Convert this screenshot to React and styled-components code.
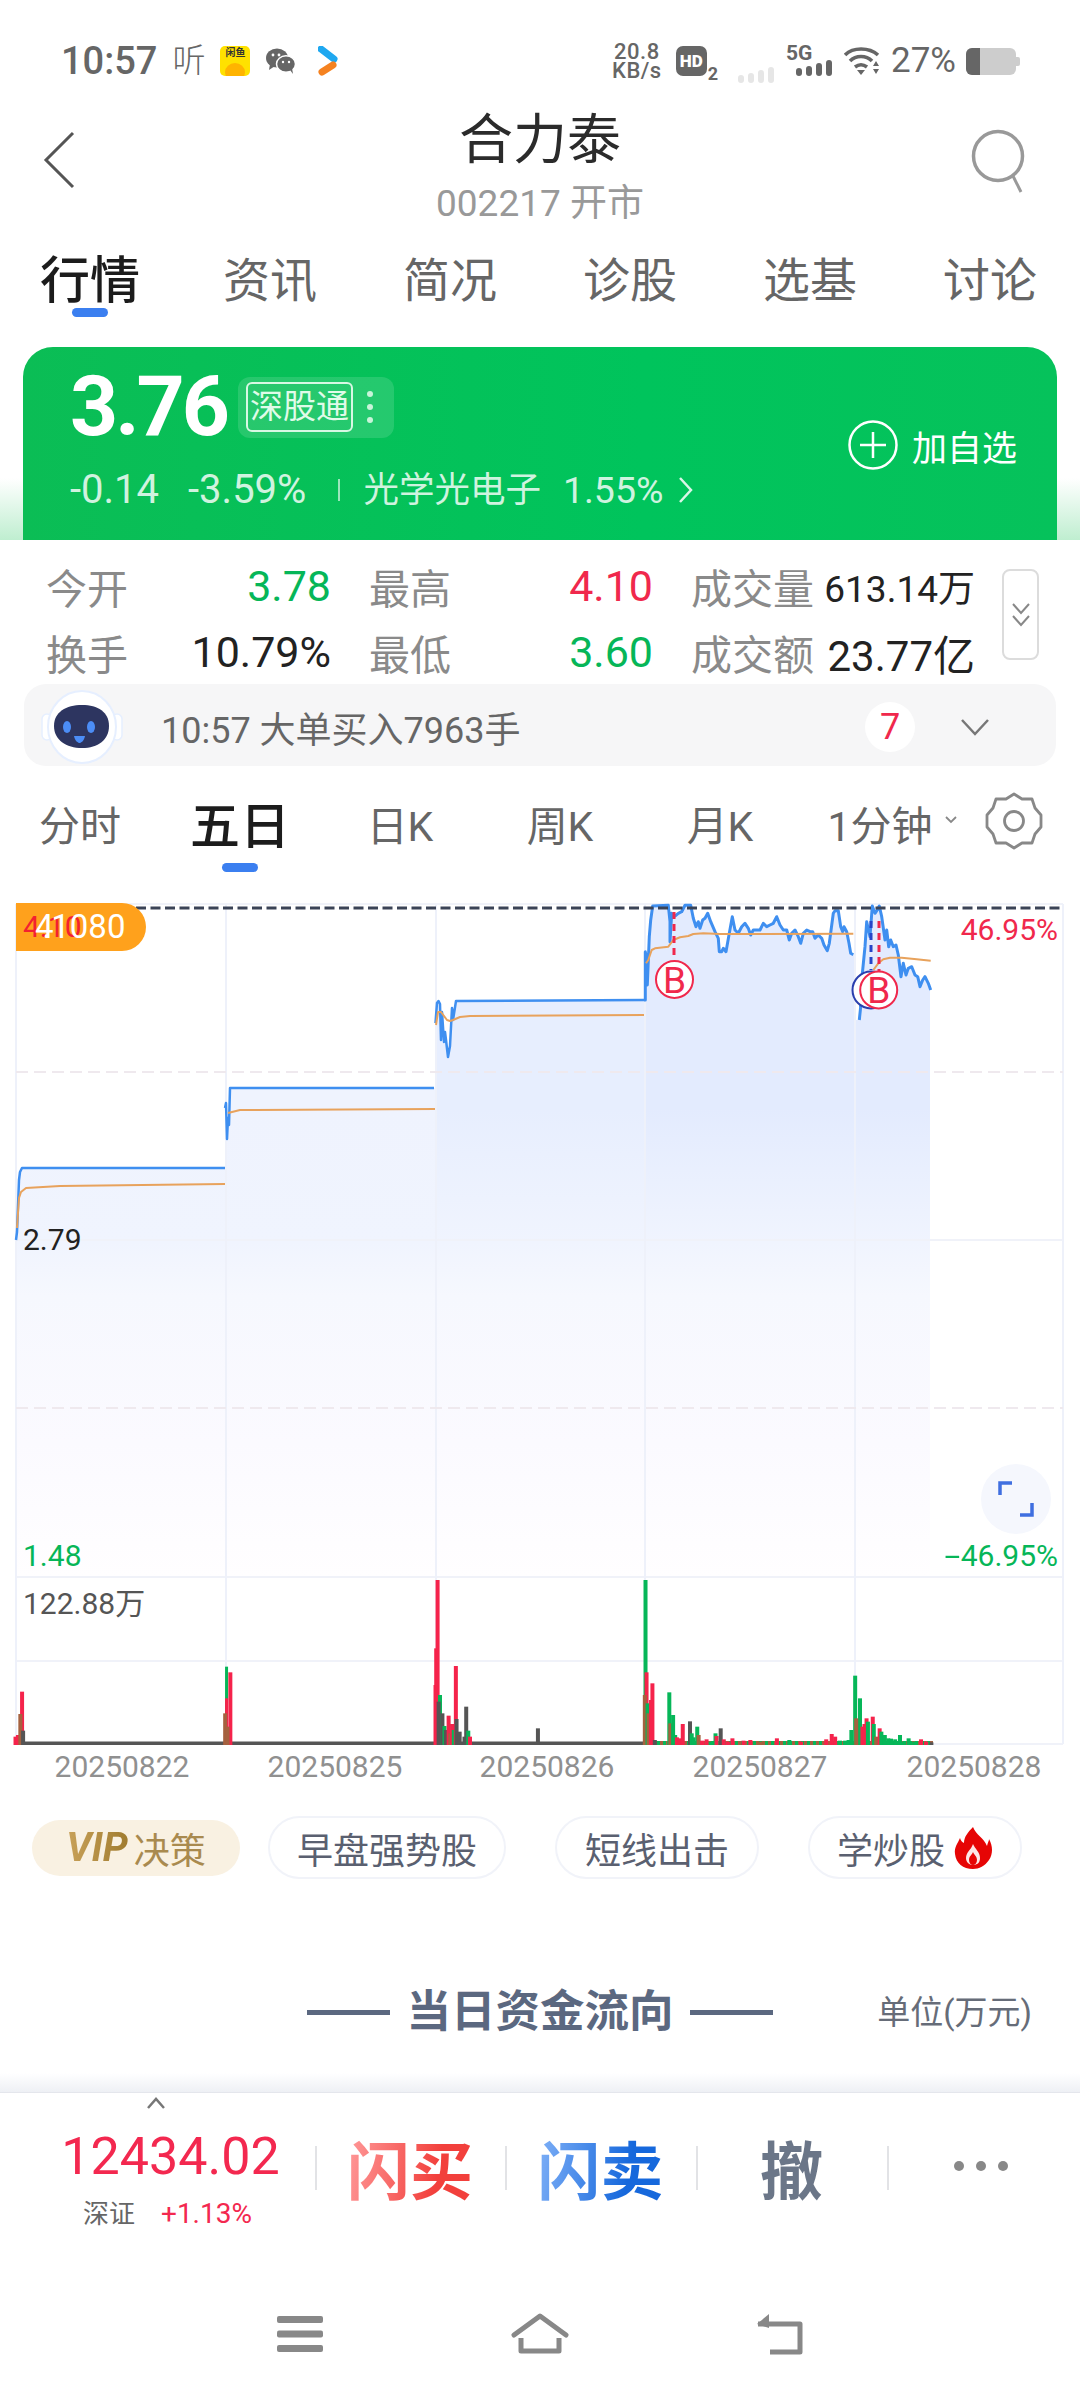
import React from 'react';
import styled, { createGlobalStyle } from 'styled-components';

const FONT = `Roboto, "Noto Sans CJK SC", "Noto Sans", sans-serif`;

const Global = createGlobalStyle`
  html, body { margin: 0; padding: 0; background: #fff; }
  body { font-family: ${FONT}; width: 1080px; height: 2400px; overflow: hidden; }
`;

const Page = styled.div`
  width: 1080px;
  height: 2400px;
  background: #fff;
  overflow: hidden;
  display: flex;
  flex-direction: column;
`;

/* status bar */
const StatusBar = styled.div`
  height: 98px;
  padding: 12px 60px 0 61px;
  display: flex;
  align-items: center;
  justify-content: space-between;
  color: #666;
  flex: none;
`;
const StatusGroup = styled.div`
  display: flex;
  align-items: center;
`;
const Clock = styled.span`
  font-size: 38px;
  font-weight: 500;
  line-height: 44px;
`;
const ListenText = styled.span`
  font-size: 33px;
  margin: 0 15px;
  line-height: 44px;
  font-weight: 300;
`;
const FishIcon = styled.div`
  width: 30px;
  height: 30px;
  background: #ffe100;
  border-radius: 5px;
  position: relative;
  overflow: hidden;
  font-size: 10px;
  line-height: 13px;
  font-weight: 700;
  color: #333;
  text-align: center;
  margin-right: 16px;
`;
const FishFace = styled.span`
  position: absolute;
  left: 5px;
  bottom: -5px;
  width: 20px;
  height: 18px;
  border-radius: 50%;
  background: #ffb400;
`;
const NetSpeed = styled.div`
  font-size: 22px;
  font-weight: 500;
  line-height: 19px;
  text-align: center;
  margin-right: 14px;
  letter-spacing: 0.5px;
`;
const HdBox = styled.div`
  width: 31px;
  height: 30px;
  border-radius: 7px;
  background: #666;
  color: #fff;
  font-size: 17px;
  font-weight: 900;
  line-height: 30px;
  text-align: center;
`;
const HdSub = styled.span`
  font-size: 18px;
  font-weight: 700;
  align-self: flex-end;
  margin: 0 20px 0 1px;
  line-height: 18px;
`;
const FaintBars = styled.span`
  margin-right: 12px;
  align-self: flex-end;
  line-height: 0;
`;
const SignalWrap = styled.div`
  position: relative;
  margin-right: 13px;
  width: 45px;
  height: 30px;
`;
const FiveG = styled.span`
  position: absolute;
  left: 0;
  top: -3px;
  font-size: 21px;
  font-weight: 700;
  line-height: 20px;
`;
const SignalBars = styled.span`
  position: absolute;
  left: 10px;
  bottom: 0;
  line-height: 0;
`;
const Percent = styled.span`
  font-size: 35px;
  line-height: 44px;
  margin: 0 10px 0 9px;
`;

/* header */
const Header = styled.div`
  display: flex;
  flex-direction: column;
  align-items: center;
  position: relative;
  flex: none;
`;
const Title = styled.div`
  font-size: 54px;
  line-height: 62px;
  color: #2b2b2b;
`;
const Sub = styled.div`
  margin-top: 10px;
  font-size: 37px;
  line-height: 44px;
  color: #999;
`;
const BackIcon = styled.svg`
  position: absolute;
  left: 42px;
  top: 21px;
`;
const SearchIcon = styled.svg`
  position: absolute;
  left: 970px;
  top: 18px;
`;

/* main tabs */
const MainTabs = styled.div`
  margin-top: 25px;
  display: grid;
  grid-template-columns: repeat(6, 180px);
  flex: none;
`;
const MainTab = styled.div`
  position: relative;
  text-align: center;
  line-height: 60px;
  font-size: ${p => (p.$active ? 50 : 47)}px;
  font-weight: ${p => (p.$active ? 500 : 400)};
  color: ${p => (p.$active ? '#1c1c1c' : '#666')};
  ${p => p.$active && `
    &::after {
      content: '';
      position: absolute;
      left: 72px;
      top: 57px;
      width: 36px;
      height: 9px;
      border-radius: 5px;
      background: #3b7ff0;
    }
  `}
`;

/* green quote */
const GreenBand = styled.div`
  margin-top: 36px;
  height: 193px;
  padding: 0 23px;
  flex: none;
  background: linear-gradient(to bottom, #fff 0%, #fff 68%, #bfeed0 100%);
`;
const QuoteCard = styled.div`
  height: 193px;
  border-radius: 30px 30px 0 0;
  background: linear-gradient(90deg, #0bbd55, #00c45c 60%, #06c25b);
  color: #fff;
  display: flex;
  justify-content: space-between;
  padding: 15px 40px 0 47px;
  box-sizing: border-box;
`;
const QuoteLeft = styled.div`
  display: flex;
  flex-direction: column;
`;
const PriceLine = styled.div`
  display: flex;
  align-items: center;
`;
const Price = styled.span`
  font-size: 84px;
  line-height: 90px;
  font-weight: 700;
  letter-spacing: -3px;
`;
const BadgeBox = styled.div`
  margin-left: 11px;
  width: 156px;
  height: 61px;
  border-radius: 12px;
  background: rgba(255, 255, 255, 0.13);
  display: flex;
  align-items: center;
  padding: 0 9px 0 8px;
  box-sizing: border-box;
  justify-content: space-between;
`;
const BadgeText = styled.span`
  border: 2px solid #d8f8e4;
  border-radius: 6px;
  font-size: 33px;
  line-height: 46px;
  width: 107px;
  text-align: center;
  box-sizing: border-box;
  color: #e0fbe9;
`;
const BadgeDots = styled.span`
  width: 6px;
  height: 6px;
  margin-right: 12px;
  border-radius: 50%;
  background: #c9f4d9;
  box-shadow: 0 -13px 0 #c9f4d9, 0 13px 0 #c9f4d9;
`;
const QuoteStats = styled.div`
  margin-top: 16px;
  display: flex;
  align-items: center;
  line-height: 44px;
  color: rgba(255, 255, 255, 0.82);
`;
const QuoteNum = styled.span`
  margin-right: ${p => p.$gap}px;
  font-size: ${p => p.$size}px;
`;
const QuoteDivider = styled.span`
  width: 2px;
  height: 22px;
  background: rgba(255, 255, 255, 0.6);
  margin-right: 23px;
`;
const AddBtn = styled.div`
  display: flex;
  align-items: center;
  margin-top: 53px;
  height: 60px;
  font-size: 35px;
`;

/* stats */
const Stats = styled.div`
  height: 130px;
  padding: 14px 0 0 46px;
  display: flex;
  flex: none;
`;
const StatGrid = styled.div`
  display: grid;
  grid-template-columns: 285px 284px 284px;
  column-gap: 38px;
  grid-auto-rows: 66px;
  margin-top: -1px;
`;
const StatCell = styled.div`
  display: flex;
  justify-content: space-between;
  align-items: center;
`;
const StatLabel = styled.span`
  font-size: 41px;
  color: #8a8a8a;
`;
const StatValue = styled.span`
  font-size: ${p => p.$size || 43}px;
  color: ${p => p.$color || '#222'};
`;
const FoldBox = styled.div`
  margin: 15px 0 0 27px;
  width: 37px;
  height: 91px;
  border: 2px solid #dcdcdc;
  border-radius: 8px;
  box-sizing: border-box;
  display: flex;
  align-items: center;
  justify-content: center;
`;

/* notice */
const Notice = styled.div`
  margin: 0 24px;
  height: 82px;
  border-radius: 22px;
  background: #f6f6f7;
  display: flex;
  align-items: center;
  flex: none;
  padding: 4px 66px 0 16px;
  box-sizing: border-box;
`;
const NoticeText = styled.span`
  font-size: 36px;
  color: #666;
  margin-left: 37px;
  flex: 1;
`;
const CountDot = styled.span`
  width: 50px;
  height: 50px;
  border-radius: 50%;
  background: #fff;
  color: #f0284c;
  font-size: 36px;
  line-height: 50px;
  text-align: center;
  margin-right: 45px;
`;

/* period tabs */
const PeriodTabs = styled.div`
  margin-top: 31px;
  display: grid;
  grid-template-columns: repeat(6, 160px) 120px;
  flex: none;
`;
const PeriodTab = styled.div`
  position: relative;
  text-align: center;
  line-height: 60px;
  font-size: ${p => (p.$active ? 50 : 41)}px;
  font-weight: ${p => (p.$active ? 500 : 400)};
  color: ${p => (p.$active ? '#1c1c1c' : '#666')};
  ${p => p.$active && `
    &::after {
      content: '';
      position: absolute;
      left: 62px;
      top: 66px;
      width: 36px;
      height: 9px;
      border-radius: 5px;
      background: #3b7ff0;
    }
  `}
`;
const SmallCaret = styled.svg`
  position: absolute;
  left: 145px;
  top: 19px;
`;
const GearWrap = styled.div`
  display: flex;
  padding: 0 0 0 25px;
  margin-top: -6px;
  height: 60px;
`;

/* chart */
const ChartPanel = styled.div`
  position: relative;
  margin-top: 33px;
  height: 900px;
  flex: none;
`;
const ChartSvg = styled.svg`
  position: absolute;
  left: 0;
  top: 0;
`;
const AxisLabel = styled.span`
  position: absolute;
  top: ${p => p.$y - 890 - 20}px;
  ${p => (p.$right ? `right: ${1080 - p.$right}px;` : `left: ${p.$x}px;`)}
  font-size: 30px;
  line-height: 40px;
  color: ${p => p.$color};
`;
const LongDash = styled.span`
  display: inline-block;
  transform: scaleX(1.9);
  transform-origin: right center;
  margin-left: 9px;
`;
const DateLabel = styled.span`
  position: absolute;
  top: ${1767 - 890 - 20}px;
  left: ${p => p.$x - 80}px;
  width: 160px;
  text-align: center;
  font-size: 30px;
  line-height: 40px;
  color: #909090;
`;
const PriceTag = styled.div`
  position: absolute;
  left: 16px;
  top: 13px;
  width: 130px;
  height: 48px;
  background: #ffa11c;
  border-radius: 0 24px 24px 0;
`;
const TagText = styled.span`
  position: absolute;
  left: 19px;
  top: 0;
  font-size: 33px;
  line-height: 48px;
  color: #fff;
`;
const TagDot = styled.span`
  margin-left: -11px;
`;
const TagRed = styled.span`
  position: absolute;
  left: 7px;
  top: 0;
  font-size: 30px;
  line-height: 48px;
  color: #f3212f;
`;
const ExpandBtn = styled.div`
  position: absolute;
  left: 981px;
  top: 574px;
  width: 70px;
  height: 70px;
  border-radius: 50%;
  background: #f5f7fd;
  display: flex;
  align-items: center;
  justify-content: center;
`;

/* pills */
const Pills = styled.div`
  margin-top: 26px;
  padding-left: 32px;
  height: 63px;
  display: flex;
  align-items: center;
  flex: none;
`;
const VipPill = styled.div`
  width: 208px;
  height: 56px;
  border-radius: 28px;
  background: #f9f1e2;
  margin-right: 28px;
  display: flex;
  align-items: center;
  justify-content: center;
  font-size: 36px;
  color: #a98a4f;
`;
const VipMark = styled.span`
  font-size: 40px;
  font-weight: 700;
  font-style: italic;
  margin-right: 6px;
  background: linear-gradient(90deg, #c9a25a, #a07c30);
  -webkit-background-clip: text;
  background-clip: text;
  color: transparent;
`;
const Pill = styled.div`
  height: 63px;
  width: ${p => p.$w}px;
  border-radius: 32px;
  border: 2px solid #f1f3f9;
  box-sizing: border-box;
  margin-right: 49px;
  display: flex;
  align-items: center;
  justify-content: center;
  font-size: 36px;
  color: #5a6070;
`;

/* heading */
const SectionHead = styled.div`
  margin-top: 103px;
  display: grid;
  grid-template-columns: 1fr auto 1fr;
  align-items: center;
  height: 60px;
  flex: none;
`;
const HeadCenter = styled.div`
  display: flex;
  align-items: center;
  font-size: 44.5px;
  line-height: 60px;
  font-weight: 700;
  color: #5b6880;
  gap: 16px;
  grid-column: 2;
`;
const HeadLine = styled.span`
  width: 83px;
  height: 5px;
  background: #5b6880;
`;
const Unit = styled.span`
  justify-self: end;
  padding-right: 48px;
  margin-bottom: 5px;
  font-size: 33px;
  color: #666c78;
`;

/* bottom */
const Shade = styled.div`
  margin-top: 31px;
  height: 19px;
  flex: none;
  background: linear-gradient(to bottom, #fff, #eef0f5);
  border-bottom: 1px solid #e4e6ec;
`;
const Bottom = styled.div`
  position: relative;
  flex: 1;
  display: flex;
  flex-direction: column;
`;
const UpCaret = styled.svg`
  position: absolute;
  left: 146px;
  top: 4px;
`;
const ActionBar = styled.div`
  margin-top: 37px;
  display: grid;
  grid-template-columns: 315px 190px 191px 191px 193px;
  flex: none;
`;
const IndexCell = styled.div`
  display: flex;
  flex-direction: column;
  align-items: center;
`;
const IndexVal = styled.div`
  font-size: 52px;
  line-height: 54px;
  color: #f3284f;
  margin-left: 26px;
`;
const IndexSub = styled.div`
  margin: 12px 0 0 20px;
  line-height: 36px;
  display: flex;
  align-items: center;
  gap: 26px;
`;
const IndexName = styled.span`
  font-size: 26px;
  color: #666;
`;
const IndexPct = styled.span`
  font-size: 28px;
  color: #f3284f;
`;
const ActionCell = styled.div`
  position: relative;
  height: 78px;
  display: flex;
  align-items: center;
  justify-content: center;
  font-size: 63px;
  line-height: 72px;
  font-weight: 700;
  &::before {
    content: '';
    position: absolute;
    left: 0;
    top: 16px;
    width: 2px;
    height: 44px;
    background: #e2e3e6;
  }
`;
const GradText = styled.span`
  margin-top: 8px;
  background: ${p => p.$bg};
  -webkit-background-clip: text;
  background-clip: text;
  color: transparent;
`;
const MoreDots = styled.span`
  width: 10px;
  height: 10px;
  margin: 0 6px 6px 0;
  border-radius: 50%;
  background: #888;
  box-shadow: -22px 0 0 #888, 22px 0 0 #888;
`;
const NavBar = styled.div`
  margin-top: 72px;
  padding: 0 180px;
  height: 60px;
  display: grid;
  grid-template-columns: repeat(3, 240px);
  justify-items: center;
  align-items: center;
  flex: none;
`;

/* chart data */
const z8 = pts => pts.map(([x, y]) => [620 + x / 3, 880 + y / 3]);
const day1 = [[16, 1240], [17, 1232], [19, 1180], [20, 1172], [22, 1168], [225, 1168]];
const day2 = [[225, 1108], [226, 1103], [227, 1139], [228, 1118], [229, 1125], [230, 1088], [434, 1088]];
const day3 = [[435.5, 1023], [437, 1003], [438.5, 1001], [440, 1004], [441, 1040], [442, 1012], [444, 1042], [445, 1032], [446, 1040], [448, 1057], [450, 1046], [452, 1008], [453, 1020], [456, 1001], [644, 1000]];
const day4 = z8([[72, 360], [76, 360], [76, 215], [80, 240], [82, 315], [88, 170], [92, 120], [98, 78], [145, 76], [150, 125], [150, 185], [155, 100], [165, 108], [175, 100], [185, 95], [195, 76], [212, 76], [220, 115], [228, 140], [235, 125], [240, 145], [248, 120], [255, 115], [263, 100], [272, 125], [285, 155], [295, 175], [298, 215], [305, 215], [310, 205], [318, 215], [328, 160], [337, 110], [345, 150], [355, 160], [365, 140], [375, 130], [385, 145], [392, 165], [400, 150], [410, 150], [420, 150], [430, 130], [440, 140], [450, 135], [460, 130], [470, 110], [480, 135], [490, 150], [500, 150], [508, 180], [515, 160], [525, 150], [535, 170], [542, 190], [550, 160], [560, 150], [570, 155], [578, 155], [585, 175], [595, 165], [605, 175], [612, 195], [622, 212], [628, 190], [640, 100], [645, 92], [655, 92], [662, 140], [668, 155], [672, 140], [680, 155], [687, 190], [692, 220], [700, 224]]);
const day5 = z8([[703, 420], [718, 420], [722, 380], [725, 300], [735, 200], [740, 125], [750, 170], [757, 78], [765, 100], [772, 90], [778, 78], [785, 110], [795, 180], [800, 150], [806, 200], [812, 180], [820, 200], [828, 195], [835, 225], [843, 290], [850, 250], [858, 285], [865, 265], [875, 260], [885, 285], [893, 290], [900, 320], [908, 300], [915, 290], [925, 310], [932, 330]]);
const avg1 = [[17, 1228], [19, 1198], [21, 1192], [26, 1188], [60, 1186], [225, 1184]];
const avg2 = [[228, 1113], [240, 1110], [435, 1109]];
const avg3 = [[436, 1025], [438, 1012], [441, 1012], [447, 1020], [450, 1021], [453, 1020], [460, 1017], [470, 1016], [644, 1015]];
const avg4 = z8([[78, 250], [85, 240], [95, 210], [105, 205], [145, 200], [160, 180], [180, 172], [205, 168], [220, 162], [250, 160], [300, 162], [700, 161]]);
const avg5 = z8([[760, 270], [775, 250], [790, 238], [810, 233], [845, 233], [890, 238], [932, 242]]);
const toPts = a => a.map(p => p.map(n => n.toFixed(1)).join(',')).join(' ');
const fillPath = (pts, x0, x1) => `M${x0},1577 L${pts.map(p => p.join(',')).join(' L')} L${x1},${pts[pts.length - 1][1]} L${x1},1577 Z`;

const dayFills = [
  { pts: day1, x0: 16, x1: 226, top: '#eff3fe' },
  { pts: day2, x0: 226, x1: 436, top: '#eff3fe' },
  { pts: day3, x0: 436, x1: 645, top: '#e7eefe' },
  { pts: day4, x0: 645, x1: 855, top: '#e3ebfe' },
  { pts: day5, x0: 855, x1: 930, top: '#e3ebfe' },
];

const R = '#f5234b', G = '#06b658', K = '#555', B = '#a5613f';
const z5 = (x, y, c, w = 4) => [x / 2.9, 1500 + y / 3, c, w];
const z6 = (x, y, c, w = 4) => [540 + x / 2.9, 1500 + y / 3, c, w];
const bars = [
  z5(45, 710, R), z5(52, 705, R), z5(64, 575, R), z5(59, 642, B), z5(67, 692, K),
  z5(657, 500, G, 3), z5(657, 595, R, 3), z5(668, 517, R), z5(653, 640, B), z5(660, 680, B),
  z5(1265, 445, R), z5(1269, 240, R), z5(1263, 555, R), z5(1276, 585, G), z5(1272, 605, K), z5(1283, 640, K), z5(1289, 678, G), z5(1293, 690, K), z5(1301, 647, R), z5(1306, 700, B), z5(1311, 672, R), z5(1316, 690, G), z5(1322, 498, R), z5(1324, 657, K), z5(1333, 695, K), z5(1352, 620, K), z5(1347, 710, K), z5(1358, 692, G), z5(1363, 710, R), z5(1560, 685, K),
  z6(306, 240, G), z6(309, 517, R), z6(304, 585, B), z6(312, 610, G), z6(315, 640, B), z6(326, 550, R), z6(322, 600, R), z6(333, 720, K),
  z6(375, 577, G), z6(378, 670, B), z6(386, 645, G), z6(392, 705, G), z6(397, 712, R), z6(405, 715, R), z6(414, 672, R), z6(435, 664, K), z6(440, 700, G), z6(445, 712, G), z6(456, 680, G), z6(460, 705, B), z6(470, 722, R), z6(483, 718, R), z6(495, 725, G), z6(509, 700, G), z6(512, 708, R), z6(524, 685, K), z6(533, 718, R), z6(545, 725, R), z6(558, 715, R), z6(590, 722, R), z6(610, 720, R), z6(640, 725, B), z6(687, 715, R), z6(723, 720, G), z6(757, 725, R), z6(830, 718, R), z6(846, 702, R), z6(856, 710, R), z6(870, 722, G), z6(885, 722, G), z6(895, 720, G), z6(903, 690, G), z6(914, 527, G), z6(928, 595, G), z6(917, 655, B), z6(935, 680, R), z6(941, 672, R), z6(947, 655, R), z6(951, 665, G), z6(965, 650, R), z6(968, 672, G), z6(975, 710, B), z6(985, 685, R), z6(990, 695, G), z6(1000, 705, G), z6(1010, 715, G), z6(1018, 716, G), z6(1030, 718, G), z6(1044, 705, G), z6(1055, 725, G), z6(1069, 715, G), z6(1085, 725, G), z6(1105, 718, R), z6(1120, 725, R), z6(1135, 727, K),
];
const smallBars = [];
for (let x = 645; x < 932; x += 3) smallBars.push([x, x % 2 ? G : B]);

const BMark = ({ cx, cy, stroke, letter }) => (
  <g>
    <circle cx={cx} cy={cy} r="18.5" fill="#fff" stroke={stroke} strokeWidth="2" />
    {letter && <text x={cx} y={cy + 13} textAnchor="middle" fontFamily="Roboto, sans-serif" fontSize="37" fill="#f0284c">B</text>}
  </g>
);

const Chart = () => (
  <ChartSvg width="1080" height="900" viewBox="0 890 1080 900">
    <defs>
      {dayFills.map((d, i) => (
        <linearGradient key={i} id={`area${i}`} gradientUnits="userSpaceOnUse" x1="0" y1="908" x2="0" y2="1577">
          <stop offset="0" stopColor={d.top} />
          <stop offset="0.3" stopColor={d.top} />
          <stop offset="0.5" stopColor="#f0f4fe" />
          <stop offset="0.58" stopColor="#f6f8fe" />
          <stop offset="0.8" stopColor="#fbfaff" />
          <stop offset="1" stopColor="#fffeff" />
        </linearGradient>
      ))}
    </defs>
    {dayFills.map((d, i) => <path key={i} d={fillPath(d.pts, d.x0, d.x1)} fill={`url(#area${i})`} />)}
    <g stroke="#f0f2f9" strokeWidth="2" fill="none">
      <path d="M16 904H1063M16 1240H1063M16 1577H1063M16 1661H1063M16 1744H1063" />
      <path d="M16 904V1744M226 904V1744M436 904V1744M645 904V1744M855 904V1744M1063 904V1744" stroke="#eef1fa" />
    </g>
    <g stroke="#efe9ee" strokeWidth="2" strokeDasharray="12 6" fill="none">
      <path d="M16 1072H1063M16 1408H1063" />
    </g>
    <g fill="none" stroke="#3f8ff0" strokeWidth="2.5" strokeLinejoin="round">
      <polyline points={toPts(day1)} />
      <polyline points={toPts(day2)} />
      <polyline points={toPts(day3)} />
      <polyline points={toPts(day4)} strokeWidth="3" />
      <polyline points={toPts(day5.slice(1))} strokeWidth="3" />
    </g>
    <g fill="none" stroke="#e8a25c" strokeWidth="2" strokeLinejoin="round">
      <polyline points={toPts(avg1)} />
      <polyline points={toPts(avg2)} />
      <polyline points={toPts(avg3)} />
      <polyline points={toPts(avg4)} />
      <polyline points={toPts(avg5)} />
    </g>
    <path d="M136 908H1062" stroke="#3a4356" strokeWidth="3" strokeDasharray="10 4.5" />
    <path d="M674 912V960" stroke="#f0284c" strokeWidth="3" strokeDasharray="7 5" />
    <path d="M871 921V970" stroke="#2545c8" strokeWidth="3" strokeDasharray="7 5" />
    <path d="M879 921V971" stroke="#f0284c" strokeWidth="3" strokeDasharray="7 5" />
    <BMark cx={674.5} cy={979.5} stroke="#f0284c" letter />
    <BMark cx={871} cy={990} stroke="#2a3fae" />
    <BMark cx={878.7} cy={990} stroke="#f0284c" letter />
    <rect x="15" y="1741.5" width="631" height="3.5" fill={K} />
    {smallBars.map(([x, c]) => <rect key={x} x={x} y="1741" width="3" height="4" fill={c} />)}
    {bars.map(([x, y, c, w], i) => <rect key={i} x={x - w / 2} y={y} width={w} height={1745 - y} fill={c} />)}
  </ChartSvg>
);

const PlayIcon = () => (
  <svg width="20" height="30" viewBox="0 0 20 30">
    <path d="M3 3L16 13" stroke="#1fa8f0" strokeWidth="7" strokeLinecap="round" />
    <path d="M4 26L15 19" stroke="#f58220" strokeWidth="7" strokeLinecap="round" />
  </svg>
);

const WeChatIcon = () => (
  <svg width="30" height="26" viewBox="0 0 30 26" style={{ marginRight: 22 }}>
    <ellipse cx="11" cy="10" rx="11" ry="9.5" fill="#666" />
    <path d="M4 16L3 22L9 18Z" fill="#666" />
    <ellipse cx="20" cy="16" rx="9.5" ry="8.2" fill="#666" stroke="#fff" strokeWidth="1.5" />
    <path d="M24 22L27 26L26 20Z" fill="#666" />
    <circle cx="7" cy="7" r="1.4" fill="#fff" />
    <circle cx="13" cy="7" r="1.4" fill="#fff" />
    <circle cx="17" cy="14" r="1.2" fill="#fff" />
    <circle cx="23" cy="14" r="1.2" fill="#fff" />
  </svg>
);

const Bars = ({ color }) => (
  <svg width="36" height="16" viewBox="0 0 36 16">
    <rect x="0" y="8" width="6" height="8" rx="3" fill={color} />
    <rect x="10" y="6" width="6" height="10" rx="3" fill={color} />
    <rect x="20" y="3" width="6" height="13" rx="3" fill={color} />
    <rect x="30" y="0" width="6" height="16" rx="3" fill={color} />
  </svg>
);

const WifiIcon = () => (
  <svg width="38" height="30" viewBox="0 0 38 30">
    <g fill="none" stroke="#666" strokeWidth="3.6">
      <path d="M1 9C9 1 25 1 34 9" />
      <path d="M6 15C12 9 22 9 28 15" />
      <path d="M11 21C15 18 19 18 23 21" />
    </g>
    <path d="M13 24L17 29L21 24Z" fill="#666" />
    <path d="M32 15L29 20H35ZM32 28L29 23H35Z" fill="#666" />
  </svg>
);

const BatteryIcon = () => (
  <svg width="54" height="27" viewBox="0 0 54 27">
    <rect x="0" y="0" width="50" height="27" rx="6" fill="#cdcdcd" />
    <path d="M6 0H14V27H6A6 6 0 0 1 0 21V6A6 6 0 0 1 6 0Z" fill="#666" />
    <path d="M50 9H52A2 2 0 0 1 54 11V16A2 2 0 0 1 52 18H50Z" fill="#cdcdcd" />
  </svg>
);

const Robot = () => (
  <svg width="84" height="78" viewBox="0 0 84 78">
    <rect x="2" y="26" width="10" height="26" rx="5" fill="#fff" stroke="#e6efff" strokeWidth="1.5" />
    <rect x="72" y="26" width="10" height="26" rx="5" fill="#fff" stroke="#e6efff" strokeWidth="1.5" />
    <ellipse cx="42" cy="39" rx="34" ry="36" fill="#fff" stroke="#e6efff" strokeWidth="2" />
    <path d="M14 38C14 24 26 17 42 17C58 17 69 24 69 38C69 52 58 60 42 60C26 60 14 52 14 38Z" fill="#2d3560" />
    <ellipse cx="27" cy="39" rx="4" ry="6" fill="#4c8df6" />
    <ellipse cx="51" cy="39" rx="4" ry="6" fill="#4c8df6" />
    <path d="M34 48H45C44 53 41 55 39.5 55C38 55 35 53 34 48Z" fill="#4c8df6" />
  </svg>
);

const Flame = () => (
  <svg width="40" height="42" viewBox="0 0 40 42" style={{ marginLeft: 8 }}>
    <path d="M20 0C23 8 31 11 34 19C35 15 36 14 36 12C40 19 40 27 36 33C32 39 26 42 20 42C10 42 3 36 2 27C1 20 5 16 7 11C8 14 9 15 11 16C11 10 15 5 20 0Z" fill="#e60505" />
    <path d="M20 17C22 22 27 25 27 31C27 36 24 38 20 38C16 38 13 35 13 31C13 25 18 23 20 17Z" fill="#fff" opacity="0.9" />
    <path d="M20 25C21 28 24 29 24 33C24 36 22 38 20 38C18 38 16 36 16 33C16 29 19 28 20 25Z" fill="#e60505" />
  </svg>
);

export default function App() {
  return (
    <Page>
      <Global />
      <StatusBar>
        <StatusGroup>
          <Clock>10:57</Clock>
          <ListenText>听</ListenText>
          <FishIcon>闲鱼<FishFace /></FishIcon>
          <WeChatIcon />
          <PlayIcon />
        </StatusGroup>
        <StatusGroup>
          <NetSpeed>20.8<br />KB/s</NetSpeed>
          <HdBox>HD</HdBox>
          <HdSub>2</HdSub>
          <FaintBars><Bars color="#e6e6e6" /></FaintBars>
          <SignalWrap>
            <FiveG>5G</FiveG>
            <SignalBars><Bars color="#666" /></SignalBars>
          </SignalWrap>
          <WifiIcon />
          <Percent>27%</Percent>
          <BatteryIcon />
        </StatusGroup>
      </StatusBar>

      <Header>
        <BackIcon width="34" height="58" viewBox="0 0 34 58">
          <path d="M31 2L4 29L31 56" fill="none" stroke="#555" strokeWidth="3" />
        </BackIcon>
        <SearchIcon width="58" height="66" viewBox="0 0 58 66">
          <circle cx="28" cy="28" r="24.5" fill="none" stroke="#999" strokeWidth="3.5" />
          <path d="M43 48L51 64" stroke="#999" strokeWidth="3" />
        </SearchIcon>
        <Title>合力泰</Title>
        <Sub>002217 开市</Sub>
      </Header>

      <MainTabs>
        <MainTab $active>行情</MainTab>
        <MainTab>资讯</MainTab>
        <MainTab>简况</MainTab>
        <MainTab>诊股</MainTab>
        <MainTab>选基</MainTab>
        <MainTab>讨论</MainTab>
      </MainTabs>

      <GreenBand>
        <QuoteCard>
          <QuoteLeft>
            <PriceLine>
              <Price>3.76</Price>
              <BadgeBox>
                <BadgeText>深股通</BadgeText>
                <BadgeDots />
              </BadgeBox>
            </PriceLine>
            <QuoteStats>
              <QuoteNum $gap={29} $size={40}>-0.14</QuoteNum>
              <QuoteNum $gap={32} $size={40}>-3.59%</QuoteNum>
              <QuoteDivider />
              <QuoteNum $gap={22} $size={35.5}>光学光电子</QuoteNum>
              <QuoteNum $gap={14} $size={37.5}>1.55%</QuoteNum>
              <svg width="15" height="28" viewBox="0 0 15 28">
                <path d="M2 2L13 14L2 26" fill="none" stroke="rgba(255,255,255,.85)" strokeWidth="2.5" />
              </svg>
            </QuoteStats>
          </QuoteLeft>
          <AddBtn>
            <svg width="50" height="50" viewBox="0 0 50 50" style={{ marginRight: 14 }}>
              <circle cx="25" cy="25" r="23.5" fill="none" stroke="#fff" strokeWidth="2.5" />
              <path d="M12 25H38M25 12V38" stroke="#fff" strokeWidth="2.5" />
            </svg>
            加自选
          </AddBtn>
        </QuoteCard>
      </GreenBand>

      <Stats>
        <StatGrid>
          <StatCell><StatLabel>今开</StatLabel><StatValue $color="#06b658">3.78</StatValue></StatCell>
          <StatCell><StatLabel>最高</StatLabel><StatValue $color="#f0284c">4.10</StatValue></StatCell>
          <StatCell><StatLabel>成交量</StatLabel><StatValue $size={37}>613.14万</StatValue></StatCell>
          <StatCell><StatLabel>换手</StatLabel><StatValue>10.79%</StatValue></StatCell>
          <StatCell><StatLabel>最低</StatLabel><StatValue $color="#06b658">3.60</StatValue></StatCell>
          <StatCell><StatLabel>成交额</StatLabel><StatValue $size={42}>23.77亿</StatValue></StatCell>
        </StatGrid>
        <FoldBox>
          <svg width="20" height="26" viewBox="0 0 20 26">
            <path d="M2 2L10 11L18 2M2 14L10 23L18 14" fill="none" stroke="#888" strokeWidth="2" />
          </svg>
        </FoldBox>
      </Stats>

      <Notice>
        <Robot />
        <NoticeText>10:57 大单买入7963手</NoticeText>
        <CountDot>7</CountDot>
        <svg width="30" height="18" viewBox="0 0 30 18">
          <path d="M2 2L15 16L28 2" fill="none" stroke="#777" strokeWidth="2.5" />
        </svg>
      </Notice>

      <PeriodTabs>
        <PeriodTab>分时</PeriodTab>
        <PeriodTab $active>五日</PeriodTab>
        <PeriodTab>日K</PeriodTab>
        <PeriodTab>周K</PeriodTab>
        <PeriodTab>月K</PeriodTab>
        <PeriodTab>
          1分钟
          <SmallCaret width="12" height="8" viewBox="0 0 12 8">
            <path d="M1 1L6 6L11 1" fill="none" stroke="#888" strokeWidth="1.8" />
          </SmallCaret>
        </PeriodTab>
        <GearWrap>
          <svg width="58" height="60" viewBox="0 0 58 60">
            <path d="M29 3L37 8L47 8L50 17L56 24V36L50 43L47 52L37 52L29 57L21 52L11 52L8 43L2 36V24L8 17L11 8L21 8Z" fill="none" stroke="#888" strokeWidth="2.8" strokeLinejoin="round" />
            <circle cx="29" cy="30" r="9.5" fill="none" stroke="#888" strokeWidth="2.8" />
          </svg>
        </GearWrap>
      </PeriodTabs>

      <ChartPanel>
        <Chart />
        <PriceTag>
          <TagRed>4.10</TagRed>
          <TagText>4<TagDot>.</TagDot>1080</TagText>
        </PriceTag>
        <AxisLabel $right={1058} $y={930} $color="#f0284c">46.95%</AxisLabel>
        <AxisLabel $x={23} $y={1240} $color="#222">2.79</AxisLabel>
        <AxisLabel $x={23} $y={1556} $color="#06b658">1.48</AxisLabel>
        <AxisLabel $right={1058} $y={1556} $color="#06b658"><LongDash>-</LongDash>46.95%</AxisLabel>
        <AxisLabel $x={23} $y={1604} $color="#555">122.88万</AxisLabel>
        <DateLabel $x={122}>20250822</DateLabel>
        <DateLabel $x={335}>20250825</DateLabel>
        <DateLabel $x={547}>20250826</DateLabel>
        <DateLabel $x={760}>20250827</DateLabel>
        <DateLabel $x={974}>20250828</DateLabel>
        <ExpandBtn>
          <svg width="36" height="36" viewBox="0 0 36 36">
            <path d="M2 14V2H14M34 22V34H22" fill="none" stroke="#3f6fe0" strokeWidth="3.5" />
          </svg>
        </ExpandBtn>
      </ChartPanel>

      <Pills>
        <VipPill><VipMark>VIP</VipMark>决策</VipPill>
        <Pill $w={238}>早盘强势股</Pill>
        <Pill $w={204}>短线出击</Pill>
        <Pill $w={214}>学炒股<Flame /></Pill>
      </Pills>

      <SectionHead>
        <HeadCenter>
          <HeadLine />
          当日资金流向
          <HeadLine />
        </HeadCenter>
        <Unit>单位(万元)</Unit>
      </SectionHead>

      <Shade />
      <Bottom>
        <UpCaret width="20" height="13" viewBox="0 0 20 13">
          <path d="M2 11L10 2L18 11" fill="none" stroke="#777" strokeWidth="2.5" />
        </UpCaret>
        <ActionBar>
          <IndexCell>
            <IndexVal>12434.02</IndexVal>
            <IndexSub>
              <IndexName>深证</IndexName>
              <IndexPct>+1.13%</IndexPct>
            </IndexSub>
          </IndexCell>
          <ActionCell><GradText $bg="linear-gradient(100deg, #ff9a9a, #f2403c 70%)">闪买</GradText></ActionCell>
          <ActionCell><GradText $bg="linear-gradient(100deg, #7fb0f7, #1668dc 70%)">闪卖</GradText></ActionCell>
          <ActionCell><GradText $bg="linear-gradient(#6b7688, #6b7688)">撤</GradText></ActionCell>
          <ActionCell><MoreDots /></ActionCell>
        </ActionBar>
        <NavBar>
          <svg width="46" height="36" viewBox="0 0 46 36">
            <rect x="0" y="0" width="46" height="7" rx="2" fill="#888" />
            <rect x="0" y="14.5" width="46" height="7" rx="2" fill="#888" />
            <rect x="0" y="29" width="46" height="7" rx="2" fill="#888" />
          </svg>
          <svg width="58" height="42" viewBox="0 0 58 42">
            <path d="M3 22L29 3L55 22" fill="none" stroke="#888" strokeWidth="5" strokeLinejoin="round" strokeLinecap="round" />
            <path d="M10 25V38H48V25" fill="none" stroke="#888" strokeWidth="5" strokeLinejoin="round" />
          </svg>
          <svg width="48" height="42" viewBox="0 0 48 42">
            <path d="M2 11H44V39H14" fill="none" stroke="#888" strokeWidth="5" strokeLinejoin="round" />
            <path d="M13 1L1 11L13 15Z" fill="#888" />
          </svg>
        </NavBar>
      </Bottom>
    </Page>
  );
}
